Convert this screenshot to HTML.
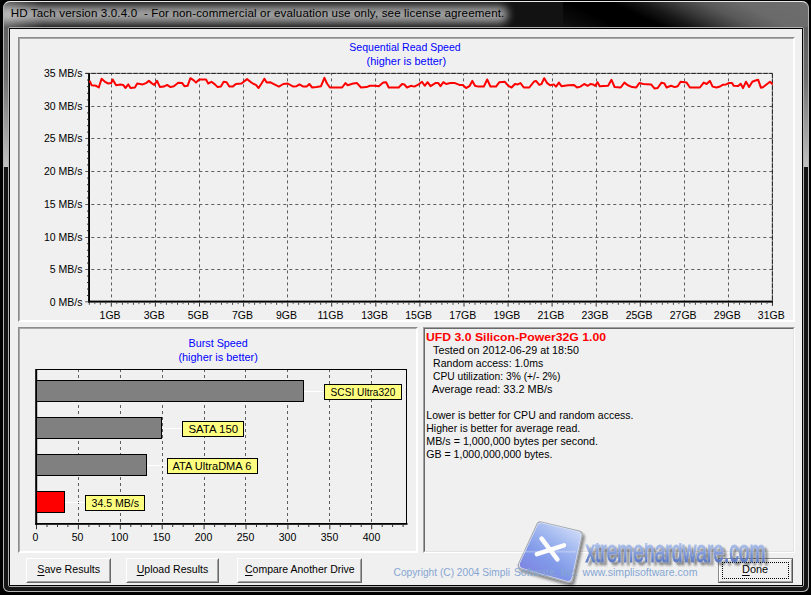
<!DOCTYPE html>
<html lang="en"><head><meta charset="utf-8"><title>HD Tach version 3.0.4.0</title>
<style>
html,body{margin:0;padding:0;background:#000;}
body{width:811px;height:595px;position:relative;overflow:hidden;font-family:"Liberation Sans",sans-serif;}
.abs{position:absolute;}
#win{left:3px;top:1px;width:806px;height:591px;border-radius:7px 7px 6px 6px;overflow:hidden;
  background:#121212;box-sizing:border-box;}
#winborder{left:3px;top:1px;width:806px;height:591px;border-radius:7px 7px 6px 6px;box-sizing:border-box;
  border:1px solid #b4b4b4;border-top-color:#e8e8e8;pointer-events:none;}
#tbR{left:560px;top:0;width:246px;height:28px;background:linear-gradient(25.6deg,#121212 0%,#000 20%,#000 34%,#181818 44%,#3a3a3a 54%,#585858 64%,#6a6a6a 76%,#6e6e6e 100%);}
#glow{left:-6px;top:5px;width:511px;height:17px;background:rgba(255,255,255,.6);filter:blur(4.5px);border-radius:8px;}
#glowL{left:0;top:0;width:40px;height:28px;background:linear-gradient(90deg,rgba(150,150,150,.55),rgba(150,150,150,0));}
#sideL,#sideR{top:26px;width:6px;height:140px;background:linear-gradient(180deg,#5e5e5e 0%,#6e6e6e 35%,#c2c2c2 100%);}
#sideL{left:0;} #sideR{left:800px;}
#sideL2,#sideR2{top:166px;width:6px;height:425px;background:#141414;}
#sideL2{left:0;} #sideR2{left:800px;}
#botf{left:0;top:584px;width:806px;height:7px;background:#161616;}
#title{left:10.7px;top:5.2px;font-size:11.6px;line-height:16px;color:#000;white-space:pre;letter-spacing:0.132px;}
#cborder{left:8px;top:27px;width:796px;height:560px;box-sizing:border-box;border:1px solid #b0b0b0;border-radius:2px;}
#cblack{left:9px;top:28px;width:794px;height:558px;background:#000;}
#content{left:10px;top:29px;width:792px;height:556px;background:#f0f0f0;}
.frame{box-sizing:border-box;border:1px solid;border-color:#8c8c8c #fff #fff #8c8c8c;}
.frame i{position:absolute;left:0;top:0;right:0;bottom:0;border:1px solid;border-color:#a8a8a8 #fff #fff #a8a8a8;}
.sunk{box-sizing:border-box;border:1px solid;border-color:#a0a0a0 #fff #fff #a0a0a0;}
.sunk i{position:absolute;left:0;top:0;right:0;bottom:0;border:1px solid;border-color:#696969 #e3e3e3 #e3e3e3 #696969;}
.btn{box-sizing:border-box;height:24.6px;top:558px;border:1px solid;border-color:#fff #696969 #696969 #fff;background:#f0f0f0;}
.btn i{position:absolute;left:0;top:0;right:0;bottom:0;border:1px solid;border-color:#f0f0f0 #a0a0a0 #a0a0a0 #f0f0f0;}
svg{position:absolute;left:0;top:0;}
.ax{font-family:"Liberation Sans",sans-serif;font-size:10.5px;fill:#000;}
.tt{font-family:"Liberation Sans",sans-serif;font-size:11px;fill:#0000ff;}
.it{font-family:"Liberation Sans",sans-serif;font-size:11.4px;fill:#000;}
.ib{font-family:"Liberation Sans",sans-serif;font-size:11.4px;font-weight:bold;fill:#ff0000;}
.bt{font-family:"Liberation Sans",sans-serif;font-size:11.4px;fill:#000;}
.cp{font-family:"Liberation Sans",sans-serif;font-size:11.2px;fill:#86a6d2;}
</style></head><body>
<div id="win" class="abs">
  <div id="tbR" class="abs"></div>
  <div id="glowL" class="abs"></div>
  <div id="glow" class="abs"></div>
  <div id="sideL" class="abs"></div><div id="sideR" class="abs"></div>
  <div id="sideL2" class="abs"></div><div id="sideR2" class="abs"></div>
  <div id="botf" class="abs"></div>
</div>
<div id="winborder" class="abs"></div>
<div id="title" class="abs">HD Tach version 3.0.4.0  - For non-commercial or evaluation use only, see license agreement.</div>
<div id="cborder" class="abs"></div>
<div id="cblack" class="abs"></div>
<div id="content" class="abs"></div>
<div class="abs frame" style="left:18px;top:37px;width:777px;height:285px;"><i></i></div>
<div class="abs frame" style="left:18px;top:327px;width:400px;height:226px;"><i></i></div>
<div class="abs sunk" style="left:423px;top:327px;width:372px;height:226px;"><i></i></div>
<div class="abs btn" style="left:26px;width:85px;"><i></i></div>
<div class="abs btn" style="left:126px;width:93px;"><i></i></div>
<div class="abs btn" style="left:237px;width:124.5px;"><i></i></div>
<div class="abs btn" id="done" style="left:718px;width:75px;border-color:#8a8a8a #555 #555 #8a8a8a;"><i style="border-color:#fff #a0a0a0 #a0a0a0 #fff"></i><b style="position:absolute;left:3px;top:3px;right:3px;bottom:3px;border:1px dotted #000;"></b></div>
<svg width="811" height="595" viewBox="0 0 811 595">
<line x1="85.3" y1="269.5" x2="772.4" y2="269.5" stroke="#5e5e5e" stroke-width="1" stroke-dasharray="3 3" stroke-dashoffset="0"/>
<line x1="85.3" y1="237.5" x2="772.4" y2="237.5" stroke="#5e5e5e" stroke-width="1" stroke-dasharray="3 3" stroke-dashoffset="0"/>
<line x1="85.3" y1="204.5" x2="772.4" y2="204.5" stroke="#5e5e5e" stroke-width="1" stroke-dasharray="3 3" stroke-dashoffset="0"/>
<line x1="85.3" y1="171.5" x2="772.4" y2="171.5" stroke="#5e5e5e" stroke-width="1" stroke-dasharray="3 3" stroke-dashoffset="0"/>
<line x1="85.3" y1="138.5" x2="772.4" y2="138.5" stroke="#5e5e5e" stroke-width="1" stroke-dasharray="3 3" stroke-dashoffset="0"/>
<line x1="85.3" y1="106.5" x2="772.4" y2="106.5" stroke="#5e5e5e" stroke-width="1" stroke-dasharray="3 3" stroke-dashoffset="0"/>
<line x1="111.5" y1="73.4" x2="111.5" y2="301.0" stroke="#5e5e5e" stroke-width="1" stroke-dasharray="3 3" stroke-dashoffset="1"/>
<line x1="155.5" y1="73.4" x2="155.5" y2="301.0" stroke="#5e5e5e" stroke-width="1" stroke-dasharray="3 3" stroke-dashoffset="1"/>
<line x1="199.5" y1="73.4" x2="199.5" y2="301.0" stroke="#5e5e5e" stroke-width="1" stroke-dasharray="3 3" stroke-dashoffset="1"/>
<line x1="243.5" y1="73.4" x2="243.5" y2="301.0" stroke="#5e5e5e" stroke-width="1" stroke-dasharray="3 3" stroke-dashoffset="1"/>
<line x1="287.5" y1="73.4" x2="287.5" y2="301.0" stroke="#5e5e5e" stroke-width="1" stroke-dasharray="3 3" stroke-dashoffset="1"/>
<line x1="331.5" y1="73.4" x2="331.5" y2="301.0" stroke="#5e5e5e" stroke-width="1" stroke-dasharray="3 3" stroke-dashoffset="1"/>
<line x1="375.5" y1="73.4" x2="375.5" y2="301.0" stroke="#5e5e5e" stroke-width="1" stroke-dasharray="3 3" stroke-dashoffset="1"/>
<line x1="419.5" y1="73.4" x2="419.5" y2="301.0" stroke="#5e5e5e" stroke-width="1" stroke-dasharray="3 3" stroke-dashoffset="1"/>
<line x1="463.5" y1="73.4" x2="463.5" y2="301.0" stroke="#5e5e5e" stroke-width="1" stroke-dasharray="3 3" stroke-dashoffset="1"/>
<line x1="508.5" y1="73.4" x2="508.5" y2="301.0" stroke="#5e5e5e" stroke-width="1" stroke-dasharray="3 3" stroke-dashoffset="1"/>
<line x1="552.5" y1="73.4" x2="552.5" y2="301.0" stroke="#5e5e5e" stroke-width="1" stroke-dasharray="3 3" stroke-dashoffset="1"/>
<line x1="596.5" y1="73.4" x2="596.5" y2="301.0" stroke="#5e5e5e" stroke-width="1" stroke-dasharray="3 3" stroke-dashoffset="1"/>
<line x1="640.5" y1="73.4" x2="640.5" y2="301.0" stroke="#5e5e5e" stroke-width="1" stroke-dasharray="3 3" stroke-dashoffset="1"/>
<line x1="684.5" y1="73.4" x2="684.5" y2="301.0" stroke="#5e5e5e" stroke-width="1" stroke-dasharray="3 3" stroke-dashoffset="1"/>
<line x1="728.5" y1="73.4" x2="728.5" y2="301.0" stroke="#5e5e5e" stroke-width="1" stroke-dasharray="3 3" stroke-dashoffset="1"/>
<line x1="85.3" y1="73.4" x2="772.4" y2="73.4" stroke="#808080" stroke-width="1"/>
<line x1="772.4" y1="73.4" x2="772.4" y2="302.0" stroke="#808080" stroke-width="1"/>
<line x1="85.3" y1="73.4" x2="772.4" y2="73.4" stroke="#222" stroke-width="1" stroke-dasharray="4.5 1.5"/>
<line x1="772.4" y1="73.4" x2="772.4" y2="307.0" stroke="#222" stroke-width="1" stroke-dasharray="4.5 1.5"/>
<rect x="88.1" y="73.4" width="1.9" height="229.2" fill="#000"/>
<rect x="88.1" y="300.6" width="684.8" height="2" fill="#000"/>
<line x1="85.2" y1="301.8" x2="88.5" y2="301.8" stroke="#555" stroke-width="1"/>
<line x1="87" y1="295.5" x2="88.5" y2="295.5" stroke="#333" stroke-width="1"/>
<line x1="87" y1="289.0" x2="88.5" y2="289.0" stroke="#333" stroke-width="1"/>
<line x1="87" y1="282.5" x2="88.5" y2="282.5" stroke="#333" stroke-width="1"/>
<line x1="87" y1="276.0" x2="88.5" y2="276.0" stroke="#333" stroke-width="1"/>
<line x1="87" y1="263.1" x2="88.5" y2="263.1" stroke="#333" stroke-width="1"/>
<line x1="87" y1="256.6" x2="88.5" y2="256.6" stroke="#333" stroke-width="1"/>
<line x1="87" y1="250.2" x2="88.5" y2="250.2" stroke="#333" stroke-width="1"/>
<line x1="87" y1="243.7" x2="88.5" y2="243.7" stroke="#333" stroke-width="1"/>
<line x1="87" y1="230.7" x2="88.5" y2="230.7" stroke="#333" stroke-width="1"/>
<line x1="87" y1="224.2" x2="88.5" y2="224.2" stroke="#333" stroke-width="1"/>
<line x1="87" y1="217.6" x2="88.5" y2="217.6" stroke="#333" stroke-width="1"/>
<line x1="87" y1="211.1" x2="88.5" y2="211.1" stroke="#333" stroke-width="1"/>
<line x1="87" y1="197.9" x2="88.5" y2="197.9" stroke="#333" stroke-width="1"/>
<line x1="87" y1="191.3" x2="88.5" y2="191.3" stroke="#333" stroke-width="1"/>
<line x1="87" y1="184.7" x2="88.5" y2="184.7" stroke="#333" stroke-width="1"/>
<line x1="87" y1="178.1" x2="88.5" y2="178.1" stroke="#333" stroke-width="1"/>
<line x1="87" y1="164.9" x2="88.5" y2="164.9" stroke="#333" stroke-width="1"/>
<line x1="87" y1="158.3" x2="88.5" y2="158.3" stroke="#333" stroke-width="1"/>
<line x1="87" y1="151.7" x2="88.5" y2="151.7" stroke="#333" stroke-width="1"/>
<line x1="87" y1="145.1" x2="88.5" y2="145.1" stroke="#333" stroke-width="1"/>
<line x1="87" y1="132.1" x2="88.5" y2="132.1" stroke="#333" stroke-width="1"/>
<line x1="87" y1="125.7" x2="88.5" y2="125.7" stroke="#333" stroke-width="1"/>
<line x1="87" y1="119.3" x2="88.5" y2="119.3" stroke="#333" stroke-width="1"/>
<line x1="87" y1="112.9" x2="88.5" y2="112.9" stroke="#333" stroke-width="1"/>
<line x1="87" y1="99.9" x2="88.5" y2="99.9" stroke="#333" stroke-width="1"/>
<line x1="87" y1="93.3" x2="88.5" y2="93.3" stroke="#333" stroke-width="1"/>
<line x1="87" y1="86.6" x2="88.5" y2="86.6" stroke="#333" stroke-width="1"/>
<line x1="87" y1="80.0" x2="88.5" y2="80.0" stroke="#333" stroke-width="1"/>
<line x1="89.3" y1="302.6" x2="89.3" y2="304.8" stroke="#444" stroke-width="1"/>
<line x1="94.8" y1="302.6" x2="94.8" y2="304.1" stroke="#555" stroke-width="1"/>
<line x1="100.3" y1="302.6" x2="100.3" y2="304.8" stroke="#444" stroke-width="1"/>
<line x1="105.8" y1="302.6" x2="105.8" y2="304.1" stroke="#555" stroke-width="1"/>
<line x1="111.3" y1="302.6" x2="111.3" y2="306.6" stroke="#333" stroke-width="1"/>
<line x1="116.8" y1="302.6" x2="116.8" y2="304.1" stroke="#555" stroke-width="1"/>
<line x1="122.4" y1="302.6" x2="122.4" y2="304.8" stroke="#444" stroke-width="1"/>
<line x1="127.9" y1="302.6" x2="127.9" y2="304.1" stroke="#555" stroke-width="1"/>
<line x1="133.4" y1="302.6" x2="133.4" y2="304.8" stroke="#444" stroke-width="1"/>
<line x1="138.9" y1="302.6" x2="138.9" y2="304.1" stroke="#555" stroke-width="1"/>
<line x1="144.4" y1="302.6" x2="144.4" y2="304.8" stroke="#444" stroke-width="1"/>
<line x1="149.9" y1="302.6" x2="149.9" y2="304.1" stroke="#555" stroke-width="1"/>
<line x1="155.4" y1="302.6" x2="155.4" y2="306.6" stroke="#333" stroke-width="1"/>
<line x1="160.9" y1="302.6" x2="160.9" y2="304.1" stroke="#555" stroke-width="1"/>
<line x1="166.4" y1="302.6" x2="166.4" y2="304.8" stroke="#444" stroke-width="1"/>
<line x1="171.9" y1="302.6" x2="171.9" y2="304.1" stroke="#555" stroke-width="1"/>
<line x1="177.5" y1="302.6" x2="177.5" y2="304.8" stroke="#444" stroke-width="1"/>
<line x1="183.0" y1="302.6" x2="183.0" y2="304.1" stroke="#555" stroke-width="1"/>
<line x1="188.5" y1="302.6" x2="188.5" y2="304.8" stroke="#444" stroke-width="1"/>
<line x1="194.0" y1="302.6" x2="194.0" y2="304.1" stroke="#555" stroke-width="1"/>
<line x1="199.5" y1="302.6" x2="199.5" y2="306.6" stroke="#333" stroke-width="1"/>
<line x1="205.0" y1="302.6" x2="205.0" y2="304.1" stroke="#555" stroke-width="1"/>
<line x1="210.5" y1="302.6" x2="210.5" y2="304.8" stroke="#444" stroke-width="1"/>
<line x1="216.0" y1="302.6" x2="216.0" y2="304.1" stroke="#555" stroke-width="1"/>
<line x1="221.5" y1="302.6" x2="221.5" y2="304.8" stroke="#444" stroke-width="1"/>
<line x1="227.1" y1="302.6" x2="227.1" y2="304.1" stroke="#555" stroke-width="1"/>
<line x1="232.6" y1="302.6" x2="232.6" y2="304.8" stroke="#444" stroke-width="1"/>
<line x1="238.1" y1="302.6" x2="238.1" y2="304.1" stroke="#555" stroke-width="1"/>
<line x1="243.6" y1="302.6" x2="243.6" y2="306.6" stroke="#333" stroke-width="1"/>
<line x1="249.1" y1="302.6" x2="249.1" y2="304.1" stroke="#555" stroke-width="1"/>
<line x1="254.6" y1="302.6" x2="254.6" y2="304.8" stroke="#444" stroke-width="1"/>
<line x1="260.1" y1="302.6" x2="260.1" y2="304.1" stroke="#555" stroke-width="1"/>
<line x1="265.6" y1="302.6" x2="265.6" y2="304.8" stroke="#444" stroke-width="1"/>
<line x1="271.1" y1="302.6" x2="271.1" y2="304.1" stroke="#555" stroke-width="1"/>
<line x1="276.6" y1="302.6" x2="276.6" y2="304.8" stroke="#444" stroke-width="1"/>
<line x1="282.1" y1="302.6" x2="282.1" y2="304.1" stroke="#555" stroke-width="1"/>
<line x1="287.7" y1="302.6" x2="287.7" y2="306.6" stroke="#333" stroke-width="1"/>
<line x1="293.2" y1="302.6" x2="293.2" y2="304.1" stroke="#555" stroke-width="1"/>
<line x1="298.7" y1="302.6" x2="298.7" y2="304.8" stroke="#444" stroke-width="1"/>
<line x1="304.2" y1="302.6" x2="304.2" y2="304.1" stroke="#555" stroke-width="1"/>
<line x1="309.7" y1="302.6" x2="309.7" y2="304.8" stroke="#444" stroke-width="1"/>
<line x1="315.2" y1="302.6" x2="315.2" y2="304.1" stroke="#555" stroke-width="1"/>
<line x1="320.7" y1="302.6" x2="320.7" y2="304.8" stroke="#444" stroke-width="1"/>
<line x1="326.2" y1="302.6" x2="326.2" y2="304.1" stroke="#555" stroke-width="1"/>
<line x1="331.7" y1="302.6" x2="331.7" y2="306.6" stroke="#333" stroke-width="1"/>
<line x1="337.2" y1="302.6" x2="337.2" y2="304.1" stroke="#555" stroke-width="1"/>
<line x1="342.8" y1="302.6" x2="342.8" y2="304.8" stroke="#444" stroke-width="1"/>
<line x1="348.3" y1="302.6" x2="348.3" y2="304.1" stroke="#555" stroke-width="1"/>
<line x1="353.8" y1="302.6" x2="353.8" y2="304.8" stroke="#444" stroke-width="1"/>
<line x1="359.3" y1="302.6" x2="359.3" y2="304.1" stroke="#555" stroke-width="1"/>
<line x1="364.8" y1="302.6" x2="364.8" y2="304.8" stroke="#444" stroke-width="1"/>
<line x1="370.3" y1="302.6" x2="370.3" y2="304.1" stroke="#555" stroke-width="1"/>
<line x1="375.8" y1="302.6" x2="375.8" y2="306.6" stroke="#333" stroke-width="1"/>
<line x1="381.3" y1="302.6" x2="381.3" y2="304.1" stroke="#555" stroke-width="1"/>
<line x1="386.8" y1="302.6" x2="386.8" y2="304.8" stroke="#444" stroke-width="1"/>
<line x1="392.4" y1="302.6" x2="392.4" y2="304.1" stroke="#555" stroke-width="1"/>
<line x1="397.9" y1="302.6" x2="397.9" y2="304.8" stroke="#444" stroke-width="1"/>
<line x1="403.4" y1="302.6" x2="403.4" y2="304.1" stroke="#555" stroke-width="1"/>
<line x1="408.9" y1="302.6" x2="408.9" y2="304.8" stroke="#444" stroke-width="1"/>
<line x1="414.4" y1="302.6" x2="414.4" y2="304.1" stroke="#555" stroke-width="1"/>
<line x1="419.9" y1="302.6" x2="419.9" y2="306.6" stroke="#333" stroke-width="1"/>
<line x1="425.4" y1="302.6" x2="425.4" y2="304.1" stroke="#555" stroke-width="1"/>
<line x1="430.9" y1="302.6" x2="430.9" y2="304.8" stroke="#444" stroke-width="1"/>
<line x1="436.4" y1="302.6" x2="436.4" y2="304.1" stroke="#555" stroke-width="1"/>
<line x1="441.9" y1="302.6" x2="441.9" y2="304.8" stroke="#444" stroke-width="1"/>
<line x1="447.4" y1="302.6" x2="447.4" y2="304.1" stroke="#555" stroke-width="1"/>
<line x1="453.0" y1="302.6" x2="453.0" y2="304.8" stroke="#444" stroke-width="1"/>
<line x1="458.5" y1="302.6" x2="458.5" y2="304.1" stroke="#555" stroke-width="1"/>
<line x1="464.0" y1="302.6" x2="464.0" y2="306.6" stroke="#333" stroke-width="1"/>
<line x1="469.5" y1="302.6" x2="469.5" y2="304.1" stroke="#555" stroke-width="1"/>
<line x1="475.0" y1="302.6" x2="475.0" y2="304.8" stroke="#444" stroke-width="1"/>
<line x1="480.5" y1="302.6" x2="480.5" y2="304.1" stroke="#555" stroke-width="1"/>
<line x1="486.0" y1="302.6" x2="486.0" y2="304.8" stroke="#444" stroke-width="1"/>
<line x1="491.5" y1="302.6" x2="491.5" y2="304.1" stroke="#555" stroke-width="1"/>
<line x1="497.0" y1="302.6" x2="497.0" y2="304.8" stroke="#444" stroke-width="1"/>
<line x1="502.6" y1="302.6" x2="502.6" y2="304.1" stroke="#555" stroke-width="1"/>
<line x1="508.1" y1="302.6" x2="508.1" y2="306.6" stroke="#333" stroke-width="1"/>
<line x1="513.6" y1="302.6" x2="513.6" y2="304.1" stroke="#555" stroke-width="1"/>
<line x1="519.1" y1="302.6" x2="519.1" y2="304.8" stroke="#444" stroke-width="1"/>
<line x1="524.6" y1="302.6" x2="524.6" y2="304.1" stroke="#555" stroke-width="1"/>
<line x1="530.1" y1="302.6" x2="530.1" y2="304.8" stroke="#444" stroke-width="1"/>
<line x1="535.6" y1="302.6" x2="535.6" y2="304.1" stroke="#555" stroke-width="1"/>
<line x1="541.1" y1="302.6" x2="541.1" y2="304.8" stroke="#444" stroke-width="1"/>
<line x1="546.6" y1="302.6" x2="546.6" y2="304.1" stroke="#555" stroke-width="1"/>
<line x1="552.1" y1="302.6" x2="552.1" y2="306.6" stroke="#333" stroke-width="1"/>
<line x1="557.6" y1="302.6" x2="557.6" y2="304.1" stroke="#555" stroke-width="1"/>
<line x1="563.2" y1="302.6" x2="563.2" y2="304.8" stroke="#444" stroke-width="1"/>
<line x1="568.7" y1="302.6" x2="568.7" y2="304.1" stroke="#555" stroke-width="1"/>
<line x1="574.2" y1="302.6" x2="574.2" y2="304.8" stroke="#444" stroke-width="1"/>
<line x1="579.7" y1="302.6" x2="579.7" y2="304.1" stroke="#555" stroke-width="1"/>
<line x1="585.2" y1="302.6" x2="585.2" y2="304.8" stroke="#444" stroke-width="1"/>
<line x1="590.7" y1="302.6" x2="590.7" y2="304.1" stroke="#555" stroke-width="1"/>
<line x1="596.2" y1="302.6" x2="596.2" y2="306.6" stroke="#333" stroke-width="1"/>
<line x1="601.7" y1="302.6" x2="601.7" y2="304.1" stroke="#555" stroke-width="1"/>
<line x1="607.2" y1="302.6" x2="607.2" y2="304.8" stroke="#444" stroke-width="1"/>
<line x1="612.7" y1="302.6" x2="612.7" y2="304.1" stroke="#555" stroke-width="1"/>
<line x1="618.3" y1="302.6" x2="618.3" y2="304.8" stroke="#444" stroke-width="1"/>
<line x1="623.8" y1="302.6" x2="623.8" y2="304.1" stroke="#555" stroke-width="1"/>
<line x1="629.3" y1="302.6" x2="629.3" y2="304.8" stroke="#444" stroke-width="1"/>
<line x1="634.8" y1="302.6" x2="634.8" y2="304.1" stroke="#555" stroke-width="1"/>
<line x1="640.3" y1="302.6" x2="640.3" y2="306.6" stroke="#333" stroke-width="1"/>
<line x1="645.8" y1="302.6" x2="645.8" y2="304.1" stroke="#555" stroke-width="1"/>
<line x1="651.3" y1="302.6" x2="651.3" y2="304.8" stroke="#444" stroke-width="1"/>
<line x1="656.8" y1="302.6" x2="656.8" y2="304.1" stroke="#555" stroke-width="1"/>
<line x1="662.3" y1="302.6" x2="662.3" y2="304.8" stroke="#444" stroke-width="1"/>
<line x1="667.8" y1="302.6" x2="667.8" y2="304.1" stroke="#555" stroke-width="1"/>
<line x1="673.4" y1="302.6" x2="673.4" y2="304.8" stroke="#444" stroke-width="1"/>
<line x1="678.9" y1="302.6" x2="678.9" y2="304.1" stroke="#555" stroke-width="1"/>
<line x1="684.4" y1="302.6" x2="684.4" y2="306.6" stroke="#333" stroke-width="1"/>
<line x1="689.9" y1="302.6" x2="689.9" y2="304.1" stroke="#555" stroke-width="1"/>
<line x1="695.4" y1="302.6" x2="695.4" y2="304.8" stroke="#444" stroke-width="1"/>
<line x1="700.9" y1="302.6" x2="700.9" y2="304.1" stroke="#555" stroke-width="1"/>
<line x1="706.4" y1="302.6" x2="706.4" y2="304.8" stroke="#444" stroke-width="1"/>
<line x1="711.9" y1="302.6" x2="711.9" y2="304.1" stroke="#555" stroke-width="1"/>
<line x1="717.4" y1="302.6" x2="717.4" y2="304.8" stroke="#444" stroke-width="1"/>
<line x1="722.9" y1="302.6" x2="722.9" y2="304.1" stroke="#555" stroke-width="1"/>
<line x1="728.5" y1="302.6" x2="728.5" y2="306.6" stroke="#333" stroke-width="1"/>
<line x1="734.0" y1="302.6" x2="734.0" y2="304.1" stroke="#555" stroke-width="1"/>
<line x1="739.5" y1="302.6" x2="739.5" y2="304.8" stroke="#444" stroke-width="1"/>
<line x1="745.0" y1="302.6" x2="745.0" y2="304.1" stroke="#555" stroke-width="1"/>
<line x1="750.5" y1="302.6" x2="750.5" y2="304.8" stroke="#444" stroke-width="1"/>
<line x1="756.0" y1="302.6" x2="756.0" y2="304.1" stroke="#555" stroke-width="1"/>
<line x1="761.5" y1="302.6" x2="761.5" y2="304.8" stroke="#444" stroke-width="1"/>
<line x1="767.0" y1="302.6" x2="767.0" y2="304.1" stroke="#555" stroke-width="1"/>
<polyline points="89.9,81.3 91.7,85.3 96.1,85.8 98.8,87.5 101.6,78.7 105.0,81.8 108.3,83.5 111.2,83.1 112.7,79.5 116.1,85.3 120.5,84.6 123.2,84.9 125.4,88.0 128.3,84.4 130.5,88.0 134.9,87.5 137.2,83.5 142.7,84.4 146.0,83.1 148.9,80.9 151.6,83.1 154.3,84.9 157.1,80.9 160.0,87.1 163.8,86.6 167.1,84.9 170.5,87.1 173.8,86.2 178.2,82.7 182.2,83.1 184.4,86.2 187.6,85.8 190.4,78.2 193.8,80.4 196.0,82.6 199.3,79.5 206.0,79.5 208.2,83.5 211.5,81.8 214.9,84.4 217.7,87.1 220.9,86.6 223.7,81.8 226.6,82.2 229.3,86.6 232.6,86.6 235.9,84.0 241.5,83.5 247.0,79.1 250.4,81.8 253.7,84.0 255.9,84.9 258.6,88.0 261.5,83.5 264.4,78.7 266.7,82.6 270.0,82.2 274.4,84.4 278.9,86.6 283.3,84.0 287.7,83.5 293.3,86.6 296.6,86.2 299.5,84.4 303.3,86.6 306.6,86.6 309.3,84.0 312.2,87.5 316.6,87.1 321.0,86.2 324.4,77.8 327.0,83.5 329.9,87.5 342.1,87.5 345.5,83.1 347.7,85.3 353.2,83.5 357.0,83.1 361.0,87.5 366.5,87.1 369.9,85.8 375.4,85.8 378.8,86.2 383.2,82.6 386.1,82.2 388.7,87.5 398.7,87.5 402.1,84.0 404.3,84.4 407.0,87.5 410.9,85.8 414.3,86.6 418.7,84.4 422.0,81.8 424.7,85.8 427.6,82.2 430.5,86.2 435.4,83.1 438.3,83.1 440.5,86.2 443.4,82.2 446.1,84.0 450.5,83.1 455.0,83.1 459.4,84.9 462.7,84.9 466.1,88.0 469.4,86.2 472.3,80.9 475.0,85.8 478.3,86.6 483.8,86.6 487.2,79.5 490.5,86.6 496.0,86.6 499.4,82.2 504.9,81.8 508.3,85.8 511.6,87.5 514.9,84.0 517.6,84.4 520.5,83.1 523.8,87.5 529.3,87.5 533.8,81.8 536.0,80.9 539.3,84.9 541.5,84.0 544.2,78.2 547.1,83.1 550.4,85.3 553.8,84.4 556.0,86.6 558.9,82.6 561.5,86.2 568.2,85.3 573.7,84.9 577.1,87.5 580.4,86.6 584.2,84.0 587.7,85.8 590.4,84.0 593.0,84.4 595.3,85.8 597.5,82.2 599.7,86.2 608.1,85.8 611.5,79.8 614.6,87.0 620.7,87.5 624.4,82.6 627.8,85.3 632.2,87.1 636.2,87.5 639.3,83.1 643.3,84.0 651.1,84.4 654.4,88.4 657.7,88.0 661.5,82.6 664.4,83.5 666.6,87.5 671.0,85.8 674.8,87.1 677.7,86.2 680.6,81.8 686.6,82.6 689.9,87.5 699.9,87.5 703.7,82.6 706.6,84.0 709.9,80.9 712.6,86.6 716.5,87.5 720.0,86.5 723.0,84.7 726.0,84.4 729.1,83.0 732.1,83.0 733.6,85.7 738.2,86.0 740.7,83.7 743.0,88.1 746.0,81.7 749.1,87.0 752.3,81.7 754.8,80.7 758.1,79.7 760.9,87.7 762.9,87.2 770.0,81.7 772.0,83.7" fill="none" stroke="#ff0000" stroke-width="2" stroke-linejoin="round" stroke-linecap="round"/>
<text x="82.4" y="305.6" text-anchor="end" class="ax">0 MB/s</text>
<text x="82.4" y="273.1" text-anchor="end" class="ax">5 MB/s</text>
<text x="82.4" y="240.9" text-anchor="end" class="ax">10 MB/s</text>
<text x="82.4" y="208.1" text-anchor="end" class="ax">15 MB/s</text>
<text x="82.4" y="175.1" text-anchor="end" class="ax">20 MB/s</text>
<text x="82.4" y="142.1" text-anchor="end" class="ax">25 MB/s</text>
<text x="82.4" y="110.1" text-anchor="end" class="ax">30 MB/s</text>
<text x="82.4" y="77.0" text-anchor="end" class="ax">35 MB/s</text>
<text x="110.1" y="318.6" text-anchor="middle" class="ax">1GB</text>
<text x="154.2" y="318.6" text-anchor="middle" class="ax">3GB</text>
<text x="198.3" y="318.6" text-anchor="middle" class="ax">5GB</text>
<text x="242.4" y="318.6" text-anchor="middle" class="ax">7GB</text>
<text x="286.5" y="318.6" text-anchor="middle" class="ax">9GB</text>
<text x="330.5" y="318.6" text-anchor="middle" class="ax">11GB</text>
<text x="374.6" y="318.6" text-anchor="middle" class="ax">13GB</text>
<text x="418.7" y="318.6" text-anchor="middle" class="ax">15GB</text>
<text x="462.8" y="318.6" text-anchor="middle" class="ax">17GB</text>
<text x="506.9" y="318.6" text-anchor="middle" class="ax">19GB</text>
<text x="550.9" y="318.6" text-anchor="middle" class="ax">21GB</text>
<text x="595.0" y="318.6" text-anchor="middle" class="ax">23GB</text>
<text x="639.1" y="318.6" text-anchor="middle" class="ax">25GB</text>
<text x="683.2" y="318.6" text-anchor="middle" class="ax">27GB</text>
<text x="727.3" y="318.6" text-anchor="middle" class="ax">29GB</text>
<text x="771.3" y="318.6" text-anchor="middle" class="ax">31GB</text>
<text x="405" y="51.2" text-anchor="middle" class="tt" textLength="111.3" lengthAdjust="spacingAndGlyphs">Sequential Read Speed</text>
<text x="406.3" y="64.5" text-anchor="middle" class="tt" textLength="79.6" lengthAdjust="spacingAndGlyphs">(higher is better)</text>
<line x1="78.5" y1="369.0" x2="78.5" y2="523.0" stroke="#5e5e5e" stroke-width="1" stroke-dasharray="3 3"/>
<line x1="120.5" y1="369.0" x2="120.5" y2="523.0" stroke="#5e5e5e" stroke-width="1" stroke-dasharray="3 3"/>
<line x1="162.5" y1="369.0" x2="162.5" y2="523.0" stroke="#5e5e5e" stroke-width="1" stroke-dasharray="3 3"/>
<line x1="204.5" y1="369.0" x2="204.5" y2="523.0" stroke="#5e5e5e" stroke-width="1" stroke-dasharray="3 3"/>
<line x1="245.5" y1="369.0" x2="245.5" y2="523.0" stroke="#5e5e5e" stroke-width="1" stroke-dasharray="3 3"/>
<line x1="287.5" y1="369.0" x2="287.5" y2="523.0" stroke="#5e5e5e" stroke-width="1" stroke-dasharray="3 3"/>
<line x1="329.5" y1="369.0" x2="329.5" y2="523.0" stroke="#5e5e5e" stroke-width="1" stroke-dasharray="3 3"/>
<line x1="371.5" y1="369.0" x2="371.5" y2="523.0" stroke="#5e5e5e" stroke-width="1" stroke-dasharray="3 3"/>
<rect x="36.5" y="369.5" width="370" height="154" fill="none" stroke="#000" stroke-width="1"/>
<rect x="35.2" y="369.0" width="2" height="155.8" fill="#000"/>
<rect x="35.2" y="523.0" width="372.3" height="1.8" fill="#000"/>
<line x1="36.5" y1="524.8" x2="36.5" y2="529.3" stroke="#333" stroke-width="1"/>
<line x1="47.0" y1="524.8" x2="47.0" y2="527.0" stroke="#333" stroke-width="1"/>
<line x1="57.5" y1="524.8" x2="57.5" y2="527.0" stroke="#333" stroke-width="1"/>
<line x1="67.9" y1="524.8" x2="67.9" y2="527.0" stroke="#333" stroke-width="1"/>
<line x1="78.4" y1="524.8" x2="78.4" y2="529.3" stroke="#333" stroke-width="1"/>
<line x1="88.9" y1="524.8" x2="88.9" y2="527.0" stroke="#333" stroke-width="1"/>
<line x1="99.3" y1="524.8" x2="99.3" y2="527.0" stroke="#333" stroke-width="1"/>
<line x1="109.8" y1="524.8" x2="109.8" y2="527.0" stroke="#333" stroke-width="1"/>
<line x1="120.3" y1="524.8" x2="120.3" y2="529.3" stroke="#333" stroke-width="1"/>
<line x1="130.8" y1="524.8" x2="130.8" y2="527.0" stroke="#333" stroke-width="1"/>
<line x1="141.2" y1="524.8" x2="141.2" y2="527.0" stroke="#333" stroke-width="1"/>
<line x1="151.7" y1="524.8" x2="151.7" y2="527.0" stroke="#333" stroke-width="1"/>
<line x1="162.2" y1="524.8" x2="162.2" y2="529.3" stroke="#333" stroke-width="1"/>
<line x1="172.7" y1="524.8" x2="172.7" y2="527.0" stroke="#333" stroke-width="1"/>
<line x1="183.2" y1="524.8" x2="183.2" y2="527.0" stroke="#333" stroke-width="1"/>
<line x1="193.6" y1="524.8" x2="193.6" y2="527.0" stroke="#333" stroke-width="1"/>
<line x1="204.1" y1="524.8" x2="204.1" y2="529.3" stroke="#333" stroke-width="1"/>
<line x1="214.6" y1="524.8" x2="214.6" y2="527.0" stroke="#333" stroke-width="1"/>
<line x1="225.0" y1="524.8" x2="225.0" y2="527.0" stroke="#333" stroke-width="1"/>
<line x1="235.5" y1="524.8" x2="235.5" y2="527.0" stroke="#333" stroke-width="1"/>
<line x1="246.0" y1="524.8" x2="246.0" y2="529.3" stroke="#333" stroke-width="1"/>
<line x1="256.5" y1="524.8" x2="256.5" y2="527.0" stroke="#333" stroke-width="1"/>
<line x1="266.9" y1="524.8" x2="266.9" y2="527.0" stroke="#333" stroke-width="1"/>
<line x1="277.4" y1="524.8" x2="277.4" y2="527.0" stroke="#333" stroke-width="1"/>
<line x1="287.9" y1="524.8" x2="287.9" y2="529.3" stroke="#333" stroke-width="1"/>
<line x1="298.4" y1="524.8" x2="298.4" y2="527.0" stroke="#333" stroke-width="1"/>
<line x1="308.8" y1="524.8" x2="308.8" y2="527.0" stroke="#333" stroke-width="1"/>
<line x1="319.3" y1="524.8" x2="319.3" y2="527.0" stroke="#333" stroke-width="1"/>
<line x1="329.8" y1="524.8" x2="329.8" y2="529.3" stroke="#333" stroke-width="1"/>
<line x1="340.3" y1="524.8" x2="340.3" y2="527.0" stroke="#333" stroke-width="1"/>
<line x1="350.8" y1="524.8" x2="350.8" y2="527.0" stroke="#333" stroke-width="1"/>
<line x1="361.2" y1="524.8" x2="361.2" y2="527.0" stroke="#333" stroke-width="1"/>
<line x1="371.7" y1="524.8" x2="371.7" y2="529.3" stroke="#333" stroke-width="1"/>
<line x1="382.2" y1="524.8" x2="382.2" y2="527.0" stroke="#333" stroke-width="1"/>
<line x1="392.6" y1="524.8" x2="392.6" y2="527.0" stroke="#333" stroke-width="1"/>
<line x1="403.1" y1="524.8" x2="403.1" y2="527.0" stroke="#333" stroke-width="1"/>
<line x1="304" y1="391.5" x2="324" y2="391.5" stroke="#fff" stroke-width="1"/>
<rect x="36.5" y="380.5" width="267" height="21" fill="#808080" stroke="#000" stroke-width="1"/>
<rect x="324.5" y="384.5" width="77" height="15" fill="#ffff80" stroke="#000" stroke-width="1"/>
<text x="330.6" y="395.8" class="ax" textLength="64.8" lengthAdjust="spacingAndGlyphs">SCSI Ultra320</text>
<line x1="162" y1="428.5" x2="182" y2="428.5" stroke="#fff" stroke-width="1"/>
<rect x="36.5" y="417.5" width="125" height="21" fill="#808080" stroke="#000" stroke-width="1"/>
<rect x="182.5" y="421.5" width="61" height="15" fill="#ffff80" stroke="#000" stroke-width="1"/>
<text x="188.4" y="432.8" class="ax" textLength="49.8" lengthAdjust="spacingAndGlyphs">SATA 150</text>
<line x1="147" y1="465.5" x2="167" y2="465.5" stroke="#fff" stroke-width="1"/>
<rect x="36.5" y="454.5" width="110" height="21" fill="#808080" stroke="#000" stroke-width="1"/>
<rect x="167.5" y="458.5" width="90" height="15" fill="#ffff80" stroke="#000" stroke-width="1"/>
<text x="172.5" y="469.8" class="ax" textLength="78.8" lengthAdjust="spacingAndGlyphs">ATA UltraDMA 6</text>
<line x1="65" y1="502.5" x2="85" y2="502.5" stroke="#fff" stroke-width="1"/>
<rect x="36.5" y="491.5" width="28" height="21" fill="#ff0000" stroke="#000" stroke-width="1"/>
<rect x="85.5" y="495.5" width="59" height="15" fill="#ffff80" stroke="#000" stroke-width="1"/>
<text x="91.5" y="506.8" class="ax" textLength="47.6" lengthAdjust="spacingAndGlyphs">34.5 MB/s</text>
<text x="35.5" y="541" text-anchor="middle" class="ax">0</text>
<text x="77.5" y="541" text-anchor="middle" class="ax">50</text>
<text x="119.5" y="541" text-anchor="middle" class="ax">100</text>
<text x="161.5" y="541" text-anchor="middle" class="ax">150</text>
<text x="203.5" y="541" text-anchor="middle" class="ax">200</text>
<text x="245.5" y="541" text-anchor="middle" class="ax">250</text>
<text x="287.5" y="541" text-anchor="middle" class="ax">300</text>
<text x="329.5" y="541" text-anchor="middle" class="ax">350</text>
<text x="371.5" y="541" text-anchor="middle" class="ax">400</text>
<text x="218.2" y="346.8" text-anchor="middle" class="tt" textLength="59.3" lengthAdjust="spacingAndGlyphs">Burst Speed</text>
<text x="218.1" y="361" text-anchor="middle" class="tt" textLength="79.4" lengthAdjust="spacingAndGlyphs">(higher is better)</text>
<text x="426.0" y="340.5" class="ib" textLength="180.0" lengthAdjust="spacingAndGlyphs">UFD 3.0 Silicon-Power32G 1.00</text>
<text x="433.1" y="353.5" class="it" textLength="145.8" lengthAdjust="spacingAndGlyphs">Tested on 2012-06-29 at 18:50</text>
<text x="433.1" y="366.6" class="it" textLength="110.1" lengthAdjust="spacingAndGlyphs">Random access: 1.0ms</text>
<text x="433.0" y="379.6" class="it" textLength="127.4" lengthAdjust="spacingAndGlyphs">CPU utilization: 3% (+/- 2%)</text>
<text x="432.0" y="392.6" class="it" textLength="120.4" lengthAdjust="spacingAndGlyphs">Average read: 33.2 MB/s</text>
<text x="426.3" y="418.7" class="it" textLength="207.2" lengthAdjust="spacingAndGlyphs">Lower is better for CPU and random access.</text>
<text x="426.3" y="431.7" class="it" textLength="153.9" lengthAdjust="spacingAndGlyphs">Higher is better for average read.</text>
<text x="426.3" y="444.7" class="it" textLength="171.7" lengthAdjust="spacingAndGlyphs">MB/s = 1,000,000 bytes per second.</text>
<text x="426.3" y="457.8" class="it" textLength="126.1" lengthAdjust="spacingAndGlyphs">GB = 1,000,000,000 bytes.</text>
<text x="37.3" y="573.4" class="bt" textLength="62.8" lengthAdjust="spacingAndGlyphs">Save Results</text>
<text x="136.7" y="573.4" class="bt" textLength="71.5" lengthAdjust="spacingAndGlyphs">Upload Results</text>
<text x="245" y="573.4" class="bt" textLength="109.7" lengthAdjust="spacingAndGlyphs">Compare Another Drive</text>
<text x="742.1" y="573.3" class="bt" textLength="26.1" lengthAdjust="spacingAndGlyphs">Done</text>
<path d="M37.3 575.5h7.2M136.7 575.5h7.4M245 575.5h7.6M742.1 575.5h7.6" stroke="#000" stroke-width="1"/>
<defs>
<linearGradient id="tg" gradientUnits="userSpaceOnUse" x1="0" y1="-17" x2="0" y2="0"><stop offset="0" stop-color="#a8bde8"/><stop offset=".5" stop-color="#7893d6"/><stop offset="1" stop-color="#4f6fbf"/></linearGradient>
<linearGradient id="lg" gradientUnits="userSpaceOnUse" x1="568" y1="524" x2="530" y2="580"><stop offset="0" stop-color="#c8d6f8"/><stop offset=".3" stop-color="#94aef0"/><stop offset=".62" stop-color="#6f8ce8"/><stop offset="1" stop-color="#6c70de"/></linearGradient>
<filter id="sh" x="-5%" y="-30%" width="112%" height="190%"><feGaussianBlur in="SourceAlpha" stdDeviation="1.3"/><feOffset dx="3" dy="3.2"/><feComponentTransfer><feFuncA type="linear" slope=".52"/></feComponentTransfer><feMerge><feMergeNode/><feMergeNode in="SourceGraphic"/></feMerge></filter>
<filter id="sh2" x="-20%" y="-20%" width="150%" height="150%"><feGaussianBlur in="SourceAlpha" stdDeviation="1.6"/><feOffset dx="2" dy="2.5"/><feComponentTransfer><feFuncA type="linear" slope=".55"/></feComponentTransfer><feMerge><feMergeNode/><feMergeNode in="SourceGraphic"/></feMerge></filter>
<clipPath id="wc"><rect x="580" y="543.0" width="200" height="30"/></clipPath>
</defs>
<g opacity=".86">
<g filter="url(#sh2)"><path d="M540.3 525.3 L578.7 534.5 L568.9 579.0 L521.6 565.4 Z" fill="#9a9ea8" stroke="#9a9ea8" stroke-width="8" stroke-linejoin="round"/></g>
<path d="M540.9 526.5 L577.5 535.2 L568.2 577.7 L523.0 564.7 Z" fill="#dfe6fa" stroke="#dfe6fa" stroke-width="8" stroke-linejoin="round"/>
<path d="M541.2 527.2 L576.8 535.7 L567.7 577.0 L523.9 564.3 Z" fill="url(#lg)" stroke="url(#lg)" stroke-width="8" stroke-linejoin="round"/>
<path d="M522.5 551.6 L576 551.6" stroke="#fff" stroke-opacity=".28" stroke-width="1.6"/>
<path d="M541.6 538.6 L557.4 559.4 M536.8 554.1 L564.0 545.3" stroke="#fff" stroke-width="4.5" stroke-linecap="round" fill="none"/>
</g>
<g opacity=".92" filter="url(#sh)"><g clip-path="url(#wc)"><text id="wmt" transform="translate(585.4,561.6) scale(0.623,1)" font-family="Liberation Sans, sans-serif" font-size="30.8" fill="url(#tg)" stroke="url(#tg)" stroke-width="1.0">xtremehardware.com</text></g></g>
<text x="393.6" y="576" class="cp" textLength="116.4" lengthAdjust="spacingAndGlyphs">Copyright (C) 2004 Simpli</text>
<text x="513.9" y="576" class="cp" textLength="63.7" lengthAdjust="spacingAndGlyphs">Software, Inc.</text>
<text x="582.5" y="576" class="cp" textLength="115" lengthAdjust="spacingAndGlyphs">www.simplisoftware.com</text>
</svg>
</body></html>
